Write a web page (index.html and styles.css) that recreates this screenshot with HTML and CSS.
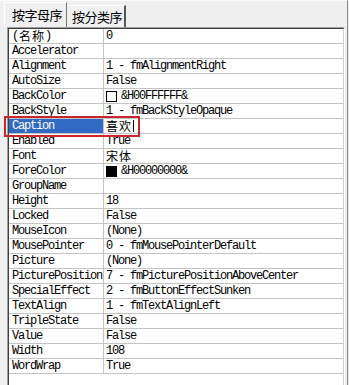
FILE: index.html
```html
<!DOCTYPE html>
<html lang="zh-CN">
<head>
    <meta charset="UTF-8">
    <title>属性</title>
    <link rel="stylesheet" href="styles.css">
</head>
<body>

<div class="window">
    <div class="tabs">
        <div class="tab active">按字母序</div>
        <div class="tab">按分类序</div>
    </div>

    <div class="grid">
        <div class="rows">
            <div class="row"><div class="name">(<span class="cjk">名称</span>)</div><div class="value">0</div></div>
            <div class="row"><div class="name">Accelerator</div><div class="value"></div></div>
            <div class="row"><div class="name">Alignment</div><div class="value">1 - fmAlignmentRight</div></div>
            <div class="row"><div class="name">AutoSize</div><div class="value">False</div></div>
            <div class="row"><div class="name">BackColor</div><div class="value"><span class="swatch"></span>&amp;H00FFFFFF&amp;</div></div>
            <div class="row"><div class="name">BackStyle</div><div class="value">1 - fmBackStyleOpaque</div></div>
            <div class="row selected"><div class="name">Caption</div><div class="value"><span class="cjk">喜欢</span><span class="caret"></span></div></div>
            <div class="row"><div class="name">Enabled</div><div class="value">True</div></div>
            <div class="row"><div class="name">Font</div><div class="value"><span class="cjk">宋体</span></div></div>
            <div class="row"><div class="name">ForeColor</div><div class="value"><span class="swatch black"></span>&amp;H00000000&amp;</div></div>
            <div class="row"><div class="name">GroupName</div><div class="value"></div></div>
            <div class="row"><div class="name">Height</div><div class="value">18</div></div>
            <div class="row"><div class="name">Locked</div><div class="value">False</div></div>
            <div class="row"><div class="name">MouseIcon</div><div class="value">(None)</div></div>
            <div class="row"><div class="name">MousePointer</div><div class="value">0 - fmMousePointerDefault</div></div>
            <div class="row"><div class="name">Picture</div><div class="value">(None)</div></div>
            <div class="row"><div class="name">PicturePosition</div><div class="value">7 - fmPicturePositionAboveCenter</div></div>
            <div class="row"><div class="name">SpecialEffect</div><div class="value">2 - fmButtonEffectSunken</div></div>
            <div class="row"><div class="name">TextAlign</div><div class="value">1 - fmTextAlignLeft</div></div>
            <div class="row"><div class="name">TripleState</div><div class="value">False</div></div>
            <div class="row"><div class="name">Value</div><div class="value">False</div></div>
            <div class="row"><div class="name">Width</div><div class="value">108</div></div>
            <div class="row"><div class="name">WordWrap</div><div class="value">True</div></div>
        </div>
    </div>

    <div class="mark"></div>
</div>

</body>
</html>
```

FILE: styles.css
```css
body {
    margin: 0;
    background-color: #f0f0f0;
    font-family: "Liberation Mono", "Noto Sans CJK SC", monospace;
}

.window {
    position: relative;
    width: 348px;
    height: 385px;
    box-sizing: border-box;
    padding: 0 2px 0 7px;
    border-right: 1px solid #8a8a8a;
    border-top: 1px solid #fafafa;
    display: flex;
    flex-direction: column;
}

.tabs {
    display: flex;
    align-items: flex-end;
    height: 26px;
    margin-left: -3px;
}

.tab {
    font-family: "Noto Sans CJK SC", sans-serif;
    font-size: 13px;
    letter-spacing: -0.5px;
    color: #000;
    white-space: nowrap;
    width: 59px;
    height: 22px;
    line-height: 21px;
    padding-left: 5px;
    border-top: 1px solid #fff;
    border-right: 2px solid #555;
    box-sizing: border-box;
}

.tab.active {
    width: 63px;
    height: 25px;
    line-height: 24px;
    padding-left: 7px;
    border-left: 1px solid #fff;
    border-right: 1px solid #777;
}

.grid {
    flex: 1;
    border-top: 1px solid #a0a0a0;
    border-left: 1px solid #a0a0a0;
    border-right: 1px solid #fff;
}

.rows {
    height: 100%;
    box-sizing: border-box;
    background-color: #fff;
    border-top: 1px solid #404040;
    border-left: 1px solid #404040;
    border-right: 1px solid #d4d0c8;
}

.row {
    display: flex;
    height: 15px;
    box-sizing: border-box;
    border-bottom: 1px solid #c4c4c4;
    font-size: 12px;
    letter-spacing: -1.2px;
    line-height: 14px;
    color: #000;
}

.name,
.value {
    display: flex;
    align-items: center;
    white-space: nowrap;
}

.name {
    width: 95px;
    flex: none;
    padding-left: 3px;
    box-sizing: border-box;
    border-right: 1px solid #c4c4c4;
}

.value {
    flex: 1;
    padding-left: 2px;
}

.cjk {
    font-family: "Noto Sans CJK SC", sans-serif;
    font-size: 12px;
    line-height: 14px;
    letter-spacing: 1px;
}

.name .cjk {
    margin-left: 1px;
}

.swatch {
    display: inline-block;
    width: 9px;
    height: 9px;
    border: 1px solid #000;
    background-color: #fff;
    margin-right: 4px;
}

.swatch.black {
    background-color: #000;
}

.selected .name {
    background-color: #316ac5;
    color: #fff;
}

.caret {
    display: inline-block;
    width: 1px;
    height: 12px;
    background-color: #000;
    margin-left: 1px;
}

.mark {
    position: absolute;
    left: 4px;
    top: 115px;
    width: 136px;
    height: 21px;
    box-sizing: border-box;
    border: 2px solid #c8282d;
}
```
